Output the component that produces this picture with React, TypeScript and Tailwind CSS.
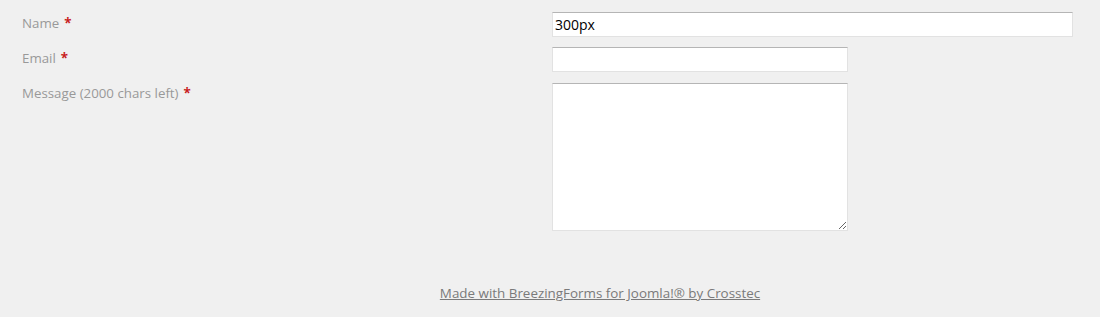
import React from "react";

function Label({ children }: { children: React.ReactNode }) {
  return (
    <div className="pl-[22px] text-[13.3px] leading-[20px] text-[#999999]">
      {children}
      <span className="ml-[5px] font-bold text-[#c81e1e]">*</span>
    </div>
  );
}

const fieldClass =
  "block bg-white border border-[#e2e2e2] border-t-[#b5b5b5] outline-none text-[14px] text-black px-[2px]";

export default function App() {
  return (
    <div
      className="h-[317px] w-[1100px] bg-[#f0f0f0] pt-[12px]"
      style={{ fontFamily: '"Open Sans", sans-serif' }}
    >
      <div className="grid grid-cols-[552px_1fr] gap-y-[10px]">
        <div className="pt-[1px]">
          <Label>Name</Label>
        </div>
        <div>
          <input
            className={fieldClass + " h-[25px] w-[521px]"}
            defaultValue="300px"
          />
        </div>

        <div className="pt-[1px]">
          <Label>Email</Label>
        </div>
        <div>
          <input className={fieldClass + " h-[25px] w-[296px]"} />
        </div>

        <div className="pt-[1px]">
          <Label>Message (2000 chars left)</Label>
        </div>
        <div className="pt-[1px]">
          <textarea className={fieldClass + " h-[148px] w-[296px] resize"} />
        </div>
      </div>

      <div className="mt-[52px] pl-[100px] text-center text-[13.4px]">
        <a href="#" className="text-[#7a7a7a] underline">
          Made with BreezingForms for Joomla!® by Crosstec
        </a>
      </div>
    </div>
  );
}
